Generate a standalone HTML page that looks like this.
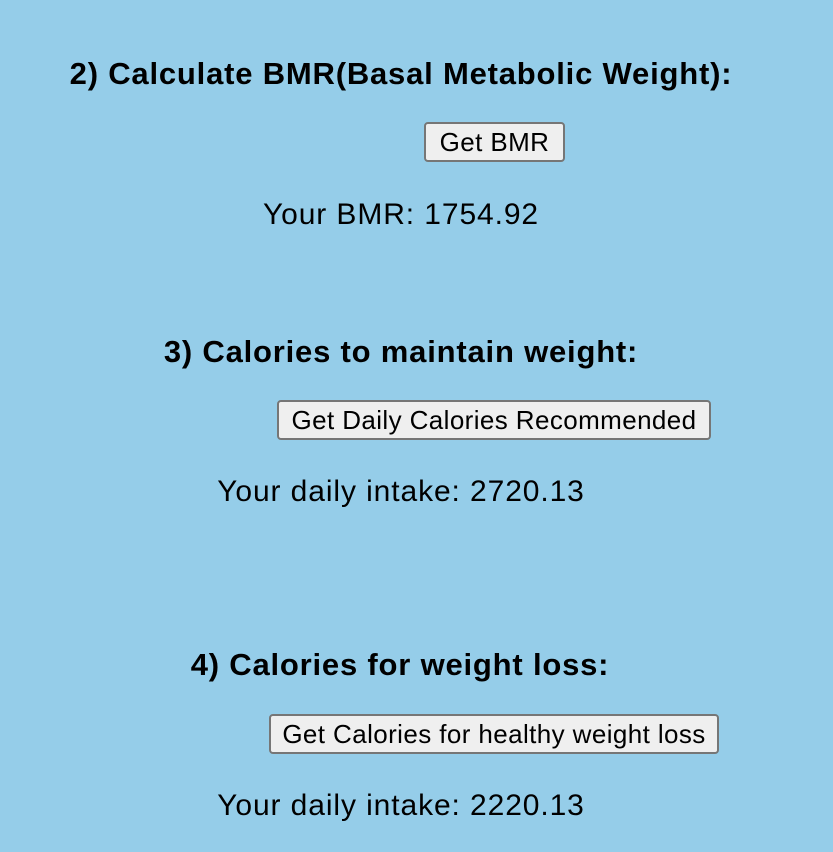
<!DOCTYPE html>
<html><head><meta charset="utf-8"><style>
html,body{margin:0;padding:0;}
body{width:833px;height:852px;background:#95cde9;position:relative;overflow:hidden;font-family:"Liberation Sans",sans-serif;color:#000;}
.t{position:absolute;white-space:nowrap;transform:translateX(-50%);line-height:28px;}
h2.t{font-size:31px;font-weight:bold;margin:0;letter-spacing:0.8px;}
.p{font-size:30px;letter-spacing:0.9px;}
.b{position:absolute;height:40px;box-sizing:border-box;border:2px solid #767676;border-radius:4px;background:#efefef;font-size:26px;letter-spacing:0.4px;line-height:36px;text-align:center;white-space:nowrap;}
</style></head><body>
<h2 class="t" style="left:401px;top:60px">2) Calculate BMR(Basal Metabolic Weight):</h2>
<div class="b" style="left:424px;top:122px;width:141px">Get BMR</div>
<div class="t p" style="left:401px;top:201px">Your BMR: 1754.92</div>
<h2 class="t" style="left:401px;top:338px">3) Calories to maintain weight:</h2>
<div class="b" style="left:277px;top:400px;width:434px">Get Daily Calories Recommended</div>
<div class="t p" style="left:401px;top:478px">Your daily intake: 2720.13</div>
<h2 class="t" style="left:400px;top:651px">4) Calories for weight loss:</h2>
<div class="b" style="left:269px;top:714px;width:450px">Get Calories for healthy weight loss</div>
<div class="t p" style="left:401px;top:792px">Your daily intake: 2220.13</div>
</body></html>
